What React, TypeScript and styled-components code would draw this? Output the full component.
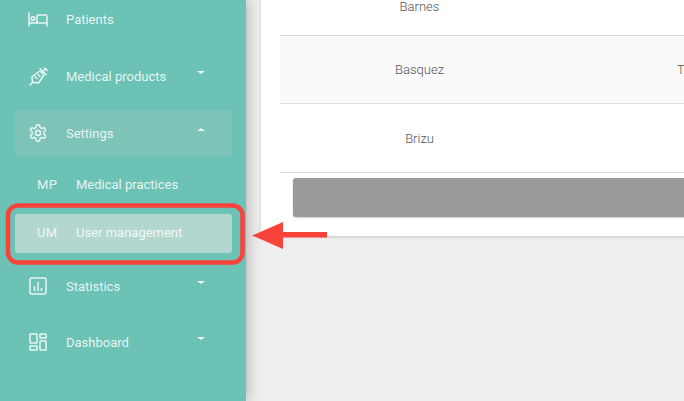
import React from "react";
import styled, { createGlobalStyle } from "styled-components";

const Global = createGlobalStyle`
  html, body { margin: 0; padding: 0; height: 100%; overflow: hidden; background: #eeeeee; }
  #root { height: 100%; }
`;

const Page = styled.div`
  position: relative;
  display: flex;
  width: 684px;
  height: 401px;
  overflow: hidden;
  font-family: Roboto, "Liberation Sans", sans-serif;
  background: #eeeeee;
`;

const Sidebar = styled.nav`
  flex: 0 0 246px;
  height: 401px;
  box-sizing: border-box;
  padding: 0 14px 0 15px;
  background: #6cc2b5;
  box-shadow: 3px 0 12px rgba(0, 0, 0, 0.22);
  z-index: 1;
  color: rgba(255, 255, 255, 0.85);
`;

const MenuList = styled.div`
  display: flex;
  flex-direction: column;
  margin-top: -4px;
`;

const MenuRow = styled.div<{ $open?: boolean; $gap?: number }>`
  display: flex;
  align-items: center;
  height: 46px;
  margin-bottom: ${(p) => p.$gap ?? 11}px;
  padding: 0 27px 0 13px;
  border-radius: 3px;
  background: ${(p) => (p.$open ? "rgba(200, 200, 200, 0.2)" : "transparent")};
`;

const IconSlot = styled.span`
  flex: 0 0 20px;
  height: 24px;
  margin-right: 18px;
  display: flex;
  align-items: center;
  justify-content: center;
`;

const Label = styled.span`
  flex: 1;
  font-size: 13px;
  font-weight: 400;
  line-height: 20px;
  white-space: nowrap;
`;

const MenuLabel = styled(Label)`
  padding-top: 1px;
`;

const Caret = styled.span<{ $up?: boolean }>`
  width: 0;
  height: 0;
  margin-bottom: 8px;
  border-left: 4px solid transparent;
  border-right: 4px solid transparent;
  ${(p) =>
    p.$up
      ? "border-bottom: 3px solid rgba(255,255,255,0.9);"
      : "border-top: 3px solid rgba(255,255,255,0.9);"}
`;

const SubRow = styled.div<{ $active?: boolean }>`
  display: flex;
  align-items: center;
  height: 39px;
  box-sizing: border-box;
  margin-bottom: 10px;
  padding: 0 0 ${(p) => (p.$active ? 2 : 0)}px 22px;
  border-radius: 3px;
  background: ${(p) => (p.$active ? "#b3d6cf" : "transparent")};
`;

const Initials = styled.span`
  flex: 0 0 39px;
  font-size: 13px;
  letter-spacing: 0.4px;
`;

const Content = styled.main`
  flex: 1;
  min-width: 0;
  padding-left: 15px;
`;

const Card = styled.section`
  width: 480px;
  height: 259px;
  margin-top: -23px;
  box-sizing: border-box;
  padding-left: 19px;
  background: #ffffff;
  box-shadow: 0 1px 3px rgba(0, 0, 0, 0.18);
  border-radius: 0 0 3px 3px;
  display: flex;
  flex-direction: column;
`;

const Row = styled.div<{ $h: number; $shade?: boolean }>`
  display: flex;
  flex: 0 0 ${(p) => p.$h}px;
  box-sizing: border-box;
  align-items: center;
  border-bottom: 1px solid #dddddd;
  background: ${(p) => (p.$shade ? "#fafafa" : "#ffffff")};
  color: #555555;
  font-size: 13px;
  font-weight: 300;
`;

const NameCell = styled.div`
  flex: 0 0 279px;
  text-align: center;
`;

const SecondCell = styled.div`
  padding-left: 118px;
  white-space: nowrap;
`;

const GreyButton = styled.div`
  height: 39px;
  margin: 5px 0 0 13px;
  border-radius: 3px;
  background: #999999;
  box-shadow: 0 1px 2px rgba(0, 0, 0, 0.2);
`;

const Overlay = styled.svg`
  position: absolute;
  left: 0;
  top: 0;
  z-index: 2;
  pointer-events: none;
`;

const Stroke = {
  fill: "none",
  stroke: "rgba(255,255,255,0.85)",
  strokeWidth: 1.5,
  strokeLinecap: "round" as const,
  strokeLinejoin: "round" as const,
};

const BedIcon = () => (
  <svg width="20" height="15" viewBox="0 0 20 15" {...Stroke}>
    <path d="M1 1v13M1 11h18M19 14V4.500a1.500 1.500 0 0 0-1.500-1.500H10a1 1 0 0 0-1 1v7" />
    <circle cx="5" cy="6.500" r="1.800" />
  </svg>
);

const SyringeIcon = () => (
  <svg width="19" height="19" viewBox="0 0 19 19" {...Stroke}>
    <path d="M1 18l3-3M3 9.500 11 4l4 4-5.500 8-6-.800zM11 1.500l6 6M14 4.500l3-3M15.500 .800l2.700 2.700M6 9.500l2 2M9 7.500l2 2" />
  </svg>
);

const GearIcon = () => (
  <svg width="20" height="20" viewBox="0 0 24 24" {...Stroke} strokeWidth={1.8}>
    <path d="M12.220 2h-.440a2 2 0 0 0-2 2v.180a2 2 0 0 1-1 1.730l-.430.250a2 2 0 0 1-2 0l-.150-.080a2 2 0 0 0-2.730.730l-.220.380a2 2 0 0 0 .730 2.730l.150.100a2 2 0 0 1 1 1.720v.510a2 2 0 0 1-1 1.740l-.150.090a2 2 0 0 0-.730 2.730l.220.380a2 2 0 0 0 2.730.730l.150-.080a2 2 0 0 1 2 0l.430.250a2 2 0 0 1 1 1.730V20a2 2 0 0 0 2 2h.440a2 2 0 0 0 2-2v-.180a2 2 0 0 1 1-1.730l.430-.250a2 2 0 0 1 2 0l.150.080a2 2 0 0 0 2.730-.730l.220-.390a2 2 0 0 0-.730-2.730l-.150-.080a2 2 0 0 1-1-1.740v-.500a2 2 0 0 1 1-1.740l.150-.090a2 2 0 0 0 .730-2.730l-.220-.380a2 2 0 0 0-2.730-.730l-.150.080a2 2 0 0 1-2 0l-.430-.250a2 2 0 0 1-1-1.730V4a2 2 0 0 0-2-2z" />
    <circle cx="12" cy="12" r="3" />
  </svg>
);

const StatsIcon = () => (
  <svg width="18" height="18" viewBox="0 0 18 18" {...Stroke}>
    <rect x="1" y="1" width="16" height="16" rx="1.500" />
    <path d="M5.500 9.500v4M9 5.500v8M12.500 11.500v2" />
  </svg>
);

const DashIcon = () => (
  <svg width="18" height="18" viewBox="0 0 18 18" {...Stroke}>
    <rect x="1" y="1" width="7" height="9" rx="0.500" />
    <rect x="1" y="13" width="7" height="4" rx="0.500" />
    <rect x="11" y="1" width="6" height="4" rx="0.500" />
    <rect x="11" y="8" width="6" height="9" rx="0.500" />
  </svg>
);

export default function App() {
  return (
    <>
      <Global />
      <Page>
        <Sidebar>
          <MenuList>
            <MenuRow>
              <IconSlot><BedIcon /></IconSlot>
              <MenuLabel>Patients</MenuLabel>
            </MenuRow>
            <MenuRow>
              <IconSlot><SyringeIcon /></IconSlot>
              <MenuLabel>Medical products</MenuLabel>
              <Caret />
            </MenuRow>
            <MenuRow $open $gap={9}>
              <IconSlot><GearIcon /></IconSlot>
              <MenuLabel>Settings</MenuLabel>
              <Caret $up />
            </MenuRow>
            <SubRow>
              <Initials>MP</Initials>
              <Label>Medical practices</Label>
            </SubRow>
            <SubRow $active>
              <Initials>UM</Initials>
              <Label>User management</Label>
            </SubRow>
            <MenuRow $gap={10}>
              <IconSlot><StatsIcon /></IconSlot>
              <MenuLabel>Statistics</MenuLabel>
              <Caret />
            </MenuRow>
            <MenuRow>
              <IconSlot><DashIcon /></IconSlot>
              <MenuLabel>Dashboard</MenuLabel>
              <Caret />
            </MenuRow>
          </MenuList>
        </Sidebar>
        <Content>
          <Card>
            <Row $h={59}>
              <NameCell>Barnes</NameCell>
            </Row>
            <Row $h={68} $shade>
              <NameCell>Basquez</NameCell>
              <SecondCell>T</SecondCell>
            </Row>
            <Row $h={69}>
              <NameCell>Brizu</NameCell>
            </Row>
            <GreyButton />
          </Card>
        </Content>
        <Overlay width="684" height="401" viewBox="0 0 684 401">
          <rect x="8" y="205.500" width="234.500" height="57" rx="10" fill="none" stroke="#f9423a" strokeWidth="4.500" />
          <path d="M252 235.500 L283 222 V232 H327 V237.500 H283 V249 Z" fill="#f9423a" />
        </Overlay>
      </Page>
    </>
  );
}
